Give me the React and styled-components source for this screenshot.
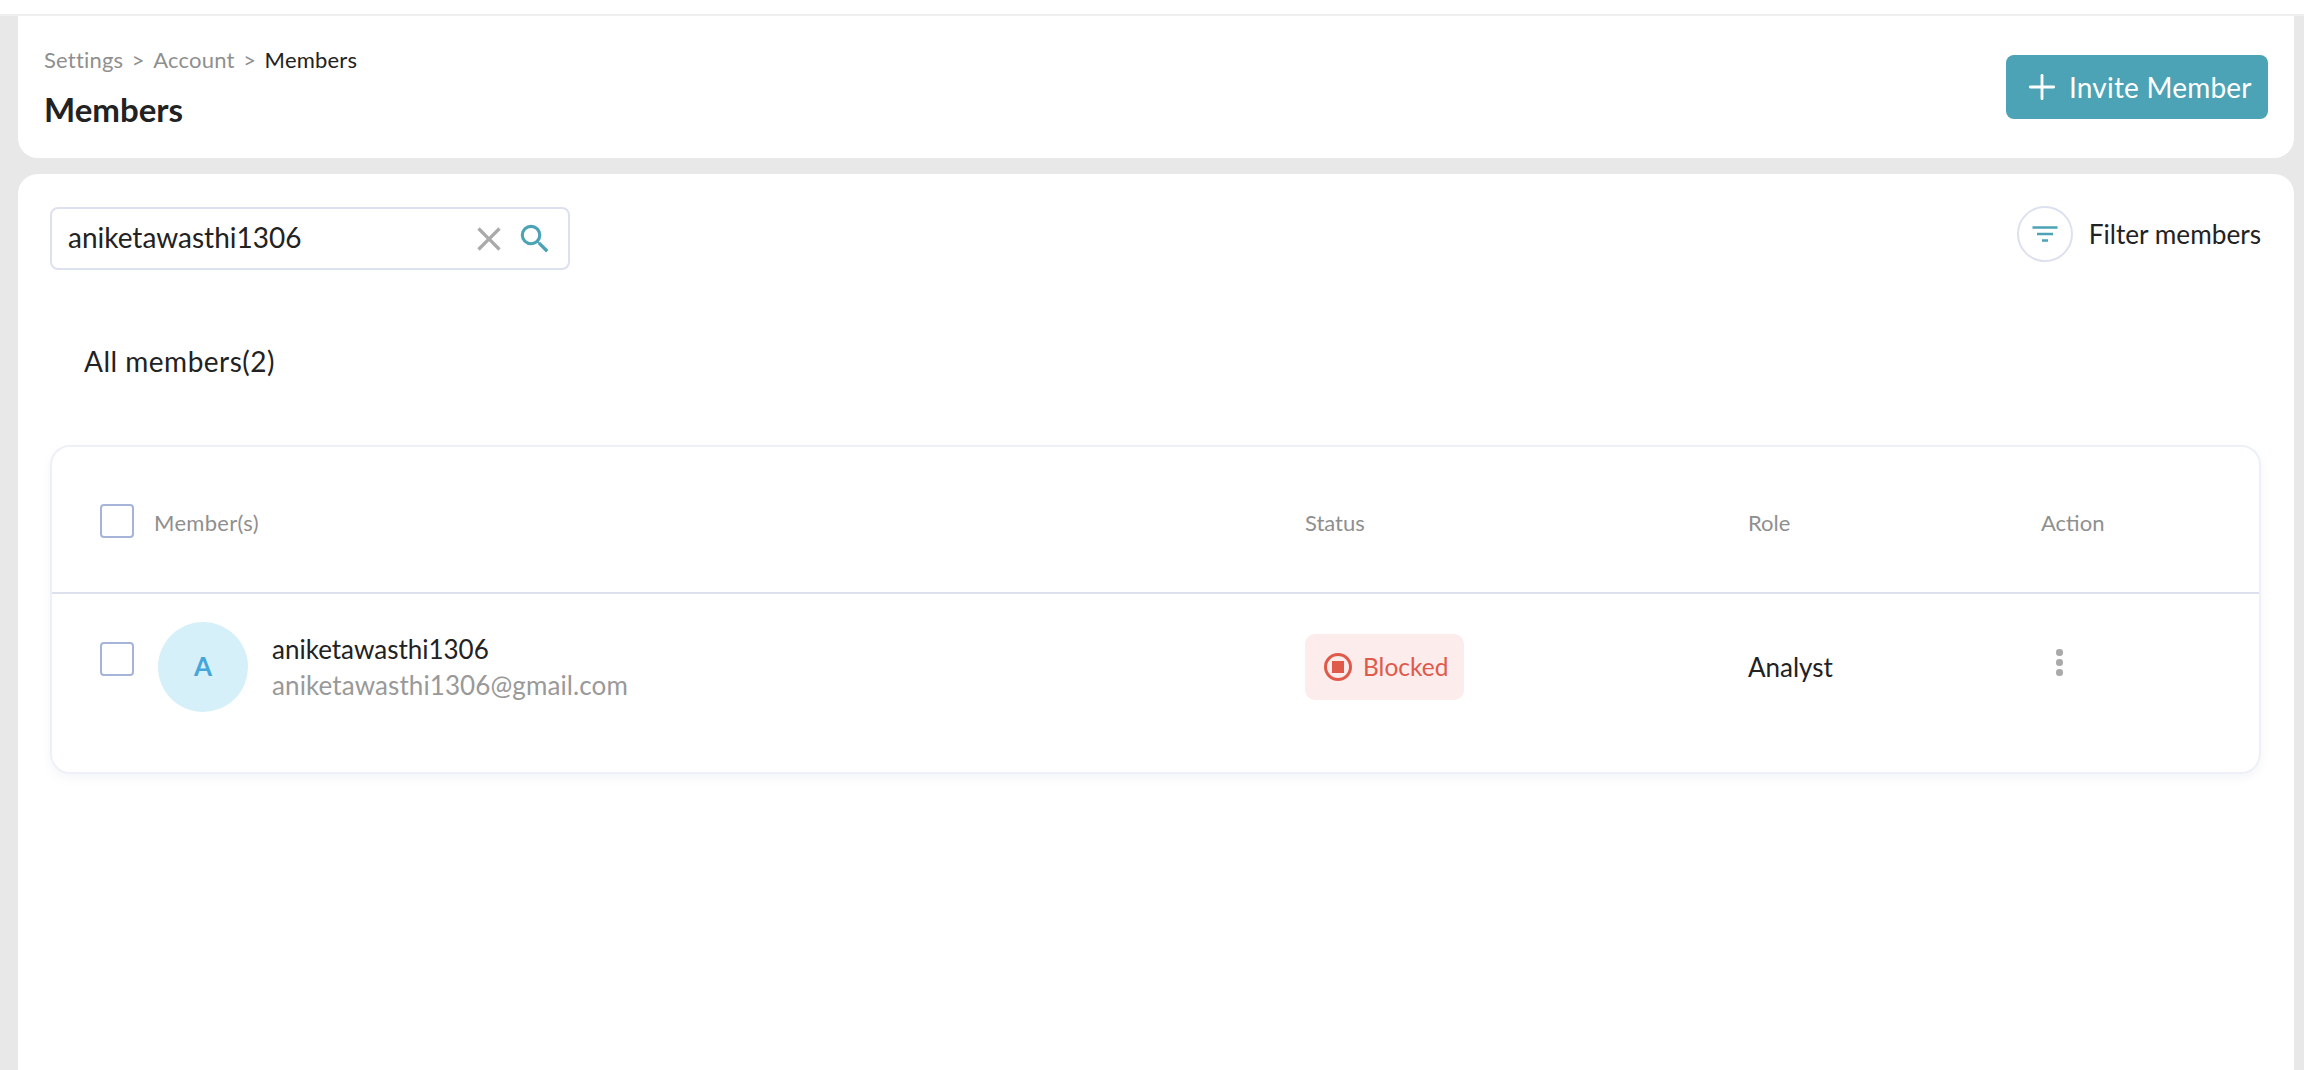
import React from 'react'
import styled, { createGlobalStyle } from 'styled-components'
import { Plus } from 'lucide-react'
import { MdClose, MdSearch } from 'react-icons/md'

const GlobalStyle = createGlobalStyle`
  html, body {
    margin: 0;
    padding: 0;
    background: #e8e8e8;
    overflow: hidden;
  }
  * { box-sizing: border-box; }
  body {
    font-family: 'Lato', 'Liberation Sans', sans-serif;
    color: #222;
  }
`

const Page = styled.div`
  height: 1070px;
  display: flex;
  flex-direction: column;
  overflow: hidden;
`

const TopStrip = styled.div`
  height: 16px;
  flex: none;
  background: #fff;
  border-bottom: 2px solid #eeeeee;
`

const Content = styled.div`
  flex: 1;
  min-height: 0;
  display: flex;
  flex-direction: column;
  gap: 16px;
  padding: 0 10px 0 18px;
`

const HeaderCard = styled.header`
  height: 142px;
  flex: none;
  background: #fff;
  border-radius: 0 0 20px 20px;
  display: flex;
  justify-content: space-between;
  padding: 33px 26px 0 27px;
`

const Breadcrumb = styled.nav`
  display: flex;
  align-items: center;
  gap: 8.5px;
  height: 20px;
  font-size: 22px;
  letter-spacing: 0.2px;
`

const Crumb = styled.span`
  color: ${(p) => (p.$current ? '#222' : '#8f8f8f')};
`

const PageTitle = styled.h1`
  margin: 20px 0 0;
  font-size: 33px;
  line-height: 40px;
  font-weight: 700;
  color: #222;
`

const TitleBlock = styled.div`
  margin-left: -1px;
`

const InviteButton = styled.button`
  width: 262px;
  height: 64px;
  margin-top: 6px;
  border: 0;
  border-radius: 8px;
  background: #4ca3b5;
  color: #fff;
  font: inherit;
  font-size: 28px;
  letter-spacing: 0.2px;
  display: flex;
  align-items: center;
  gap: 7px;
  padding: 0 0 0 16px;
`

const MainCard = styled.main`
  flex: 1;
  background: #fff;
  border-radius: 20px 20px 0 0;
  padding: 33px 33px 0 32px;
`

const Toolbar = styled.div`
  display: flex;
  justify-content: space-between;
  align-items: flex-start;
`

const SearchBox = styled.div`
  width: 520px;
  height: 63px;
  border: 2px solid #dde1ef;
  border-radius: 8px;
  display: flex;
  align-items: center;
  padding: 0 14px 0 16px;
`

const SearchValue = styled.span`
  flex: 1;
  font-size: 28px;
  padding-bottom: 4px;
`

const SearchIcons = styled.div`
  display: flex;
  align-items: center;
  gap: 7px;
`

const FilterButton = styled.div`
  display: flex;
  align-items: center;
  gap: 16px;
  margin-top: -1px;
  font-size: 26.2px;
`

const FilterCircle = styled.span`
  width: 56px;
  height: 56px;
  border: 2px solid #dde1ef;
  border-radius: 50%;
  display: flex;
  align-items: center;
  justify-content: center;
`

const SectionLabel = styled.div`
  margin: 72px 0 0 34px;
  height: 38px;
  line-height: 38px;
  font-size: 28px;
  letter-spacing: 0.5px;
`

const Table = styled.section`
  margin-top: 65px;
  height: 329px;
  border: 2px solid #eef0f8;
  border-radius: 20px;
  box-shadow: 0 4px 10px rgba(120, 130, 170, 0.08);
`

const Row = styled.div`
  display: grid;
  grid-template-columns: 1205px 443px 293px 1fr;
  padding-left: 48px;
  height: ${(p) => p.$height}px;
  border-bottom: ${(p) => (p.$divided ? '2px solid #dde1ee' : '0')};
`

const Cell = styled.div`
  display: flex;
  align-items: center;
  font-size: 26px;
`

const HeadCell = styled(Cell)`
  font-size: 22px;
  color: #8f8f8f;
  padding-top: 6px;
`

const Checkbox = styled.span`
  flex: none;
  width: 34px;
  height: 34px;
  border: 2.5px solid #a5b4d8;
  border-radius: 4px;
  background: #fff;
  transform: translateY(${(p) => p.$shift}px);
`

const HeadLabel = styled.span`
  margin-left: 20px;
  letter-spacing: 0.3px;
`

const Avatar = styled.span`
  flex: none;
  width: 90px;
  height: 90px;
  margin-left: 24px;
  border-radius: 50%;
  background: #d6f0f9;
  color: #45a6d9;
  font-size: 26px;
  font-weight: 700;
  padding-bottom: 2px;
  display: flex;
  align-items: center;
  justify-content: center;
`

const MemberInfo = styled.div`
  margin-left: 24px;
  display: flex;
  flex-direction: column;
  gap: 2px;
`

const MemberName = styled.span`
  line-height: 34px;
  font-size: 26px;
`

const MemberEmail = styled.span`
  line-height: 34px;
  font-size: 26px;
  letter-spacing: 0.1px;
  color: #999;
`

const StatusBadge = styled.span`
  width: 159px;
  height: 66px;
  border-radius: 10px;
  background: #fcecec;
  color: #e05a4a;
  font-size: 24.5px;
  display: flex;
  align-items: center;
  gap: 11px;
  padding-left: 19px;
`

const ActionDots = styled.span`
  margin-left: 15px;
  display: flex;
  flex-direction: column;
  gap: 3.5px;
  transform: translateY(-4px);
`

const Dot = styled.i`
  width: 6.5px;
  height: 6.5px;
  border-radius: 50%;
  background: #aaa;
`

const FilterIcon = () => (
  <svg width="26" height="16" viewBox="0 0 26 16" fill="none" stroke="#4ca3b5" strokeWidth="2.5">
    <path d="M0.5 1.5H25.5M5 8H21M10 14.5H16" />
  </svg>
)

const BlockedIcon = () => (
  <svg width="28" height="28" viewBox="0 0 28 28" fill="none">
    <circle cx="14" cy="14" r="12.5" stroke="#e05a4a" strokeWidth="3" />
    <rect x="8" y="8" width="12" height="12" fill="#e05a4a" />
  </svg>
)

export default function App() {
  return (
    <Page>
      <GlobalStyle />
      <TopStrip />
      <Content>
        <HeaderCard>
          <TitleBlock>
            <Breadcrumb>
              <Crumb>Settings</Crumb>
              <Crumb>&gt;</Crumb>
              <Crumb>Account</Crumb>
              <Crumb>&gt;</Crumb>
              <Crumb $current>Members</Crumb>
            </Breadcrumb>
            <PageTitle>Members</PageTitle>
          </TitleBlock>
          <InviteButton>
            <Plus size={40} strokeWidth={1.7} />
            Invite Member
          </InviteButton>
        </HeaderCard>
        <MainCard>
          <Toolbar>
            <SearchBox>
              <SearchValue>aniketawasthi1306</SearchValue>
              <SearchIcons>
                <MdClose size={40} color="#aaaaaa" />
                <MdSearch size={38} color="#4ca3b5" />
              </SearchIcons>
            </SearchBox>
            <FilterButton>
              <FilterCircle>
                <FilterIcon />
              </FilterCircle>
              Filter members
            </FilterButton>
          </Toolbar>
          <SectionLabel>All members(2)</SectionLabel>
          <Table>
            <Row $height={147} $divided>
              <HeadCell>
                <Checkbox $shift={-2} />
                <HeadLabel>Member(s)</HeadLabel>
              </HeadCell>
              <HeadCell>Status</HeadCell>
              <HeadCell>Role</HeadCell>
              <HeadCell>Action</HeadCell>
            </Row>
            <Row $height={145}>
              <Cell>
                <Checkbox $shift={-8} />
                <Avatar>A</Avatar>
                <MemberInfo>
                  <MemberName>aniketawasthi1306</MemberName>
                  <MemberEmail>aniketawasthi1306@gmail.com</MemberEmail>
                </MemberInfo>
              </Cell>
              <Cell>
                <StatusBadge>
                  <BlockedIcon />
                  Blocked
                </StatusBadge>
              </Cell>
              <Cell>Analyst</Cell>
              <Cell>
                <ActionDots>
                  <Dot />
                  <Dot />
                  <Dot />
                </ActionDots>
              </Cell>
            </Row>
          </Table>
        </MainCard>
      </Content>
    </Page>
  )
}
